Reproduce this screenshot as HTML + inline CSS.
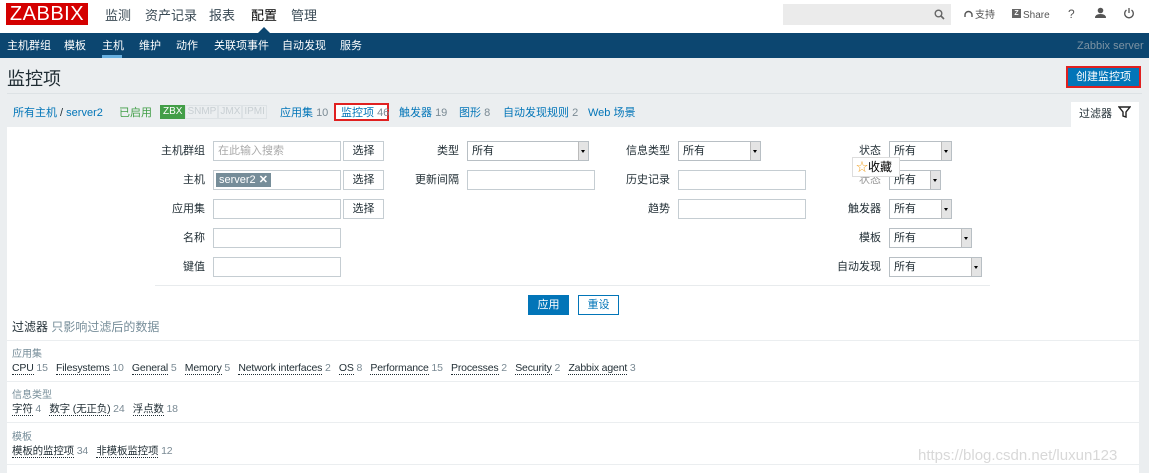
<!DOCTYPE html>
<html><head><meta charset="utf-8"><style>
*{margin:0;padding:0;box-sizing:border-box}
body{width:1149px;height:473px;overflow:hidden;background:#ebeef0;font-family:"Liberation Sans","Noto Sans CJK SC",sans-serif;font-size:11px;line-height:13px;color:#1f2c33;position:relative}
.a{position:absolute;white-space:nowrap}
.top{left:0;top:0;width:1149px;height:33px;background:#fff}
.nav{left:0;top:33px;width:1149px;height:25px;background:#0c4670}
.nav span{color:#fff;font-size:11px;position:absolute;top:7px}
.inp{position:absolute;height:20px;border:1px solid #c5cdd2;background:#fff}
.btn{position:absolute;height:20px;border:1px solid #c5cdd2;background:#fff;font-size:11px;text-align:center;line-height:18px}
.sel{position:absolute;height:20px;border:1px solid #b8bfc4;background:#fff;font-size:11px;line-height:19px;padding-left:4px}
.sel:after{content:"";position:absolute;right:0;top:0;width:9px;height:18px;background:#e4e4e4;border-left:1px solid #bbb}
.sel i{position:absolute;right:3px;top:8px;border-left:2px solid transparent;border-right:2px solid transparent;border-top:3px solid #000;z-index:2}
.lbl{position:absolute;font-size:11px;text-align:right}
.lk{color:#1f2c33;border-bottom:1px dotted #1f2c33}
.n{color:#7a8a94}
.tab{color:#0275b8;font-size:11px}
.tags{font-size:10.5px;letter-spacing:-0.17px}
</style></head><body>
<div class="a top"></div>
<div class="a" style="left:6px;top:3px;height:22px;width:82px;background:#d40000;color:#fff;font-size:20px;line-height:22px;text-align:center;letter-spacing:0.5px">ZABBIX</div>
<div class="a" style="left:105px;top:8px;font-size:13px;line-height:15px;color:#3a4a55">监测</div>
<div class="a" style="left:145px;top:8px;font-size:13px;line-height:15px;color:#3a4a55">资产记录</div>
<div class="a" style="left:209px;top:8px;font-size:13px;line-height:15px;color:#3a4a55">报表</div>
<div class="a" style="left:251px;top:8px;font-size:13px;line-height:15px;color:#000">配置</div>
<div class="a" style="left:291px;top:8px;font-size:13px;line-height:15px;color:#3a4a55">管理</div>
<div class="a" style="left:258px;top:27px;border-left:6px solid transparent;border-right:6px solid transparent;border-bottom:6px solid #0c4670"></div>
<div class="a" style="left:783px;top:4px;width:168px;height:21px;background:#ebebeb"></div>
<svg class="a" style="left:934px;top:9px" width="11" height="11" viewBox="0 0 11 11"><circle cx="4.5" cy="4.5" r="3.3" stroke="#666" stroke-width="1.4" fill="none"/><path d="M7 7l3 3" stroke="#666" stroke-width="1.6"/></svg>
<svg class="a" style="left:964px;top:10px" width="9" height="9"><path d="M1 7V5a3.5 3.5 0 0 1 7 0v2" stroke="#555" stroke-width="1.4" fill="none"/></svg>
<div class="a" style="left:975px;top:9px;font-size:10px;color:#555">支持</div>
<div class="a" style="left:1012px;top:9px;width:9px;height:9px;background:#666;color:#fff;font-size:7px;line-height:9px;text-align:center;font-weight:bold">Z</div>
<div class="a" style="left:1023px;top:9px;font-size:10px;color:#555">Share</div>
<div class="a" style="left:1068px;top:8px;font-size:12px;color:#555">?</div>
<svg class="a" style="left:1095px;top:7px" width="11" height="12"><circle cx="5.5" cy="3.5" r="2.8" fill="#555"/><path d="M0 11q0-4 5.5-4t5.5 4z" fill="#555"/></svg>
<svg class="a" style="left:1123px;top:7px" width="12" height="12"><path d="M3.5 3a4.3 4.3 0 1 0 5 0" stroke="#555" stroke-width="1.3" fill="none"/><path d="M6 1v5" stroke="#555" stroke-width="1.3"/></svg>
<div class="a nav">
<span style="left:7px">主机群组</span><span style="left:64px">模板</span><span style="left:102px">主机</span><span style="left:139px">维护</span><span style="left:176px">动作</span><span style="left:214px">关联项事件</span><span style="left:282px">自动发现</span><span style="left:340px">服务</span>
<span style="left:1077px;color:#7d93a3">Zabbix server</span>
</div>
<div class="a" style="left:102px;top:55px;width:20px;height:3px;background:#68b0e0"></div>
<div class="a" style="left:7px;top:68px;font-size:18px;line-height:22px;color:#1f2c33">监控项</div>
<div class="a" style="left:7px;top:93px;width:1135px;height:1px;background:#dde2e5"></div>
<div class="a" style="left:1066px;top:66px;width:75px;height:22px;border:2px solid #e02020;background:#0275b8;color:#fff;font-size:11px;line-height:18px;text-align:center">创建监控项</div>
<div class="a" style="left:13px;top:107px;font-size:11px"><span class="tab">所有主机</span> / <span class="tab">server2</span></div>
<div class="a" style="left:119px;top:107px;font-size:11px;color:#429e47">已启用</div>
<div class="a" style="left:160px;top:105px;height:14px;font-size:10px;line-height:12px">
<span style="display:inline-block;background:#429e47;color:#fff;padding:0 2px;border:1px solid #429e47">ZBX</span><span style="display:inline-block;color:#c8cfd3;border:1px solid #dde2e5;padding:0 1px">SNMP</span><span style="display:inline-block;color:#c8cfd3;border:1px solid #dde2e5;padding:0 1px">JMX</span><span style="display:inline-block;color:#c8cfd3;border:1px solid #dde2e5;padding:0 1px">IPMI</span></div>
<div class="a" style="left:280px;top:107px"><span class="tab">应用集</span> <span class="n">10</span></div>
<div class="a" style="left:334px;top:103px;width:55px;height:18px;border:2px solid #e02020;background:#fff;padding:2px 0 0 5px"><span class="tab">监控项</span> <span class="n">46</span></div>
<div class="a" style="left:399px;top:107px"><span class="tab">触发器</span> <span class="n">19</span></div>
<div class="a" style="left:459px;top:107px"><span class="tab">图形</span> <span class="n">8</span></div>
<div class="a" style="left:503px;top:107px"><span class="tab">自动发现规则</span> <span class="n">2</span></div>
<div class="a" style="left:588px;top:107px"><span class="tab">Web 场景</span></div>
<div class="a" style="left:1071px;top:102px;width:68px;height:26px;background:#fff"></div>
<div class="a" style="left:1079px;top:108px;font-size:11px">过滤器</div>
<svg class="a" style="left:1118px;top:106px" width="13" height="12"><path d="M1 1h11L8 6v5L5 10V6z" fill="none" stroke="#222" stroke-width="1.4"/></svg>
<div class="a" style="left:7px;top:127px;width:1132px;height:346px;background:#fff"></div>
<!-- col1 -->
<div class="lbl" style="left:150px;width:55px;top:145px">主机群组</div>
<div class="inp" style="left:213px;top:141px;width:128px;color:#aaa;font-size:11px;padding:3px 4px">在此输入搜索</div>
<div class="btn" style="left:343px;top:141px;width:41px">选择</div>
<div class="lbl" style="left:150px;width:55px;top:174px">主机</div>
<div class="inp" style="left:213px;top:170px;width:128px"><span style="position:absolute;left:2px;top:2px;height:14px;background:#768d99;color:#fff;font-size:11px;line-height:14px;padding:0 3px">server2 <b>✕</b></span></div>
<div class="btn" style="left:343px;top:170px;width:41px">选择</div>
<div class="lbl" style="left:150px;width:55px;top:203px">应用集</div>
<div class="inp" style="left:213px;top:199px;width:128px"></div>
<div class="btn" style="left:343px;top:199px;width:41px">选择</div>
<div class="lbl" style="left:150px;width:55px;top:232px">名称</div>
<div class="inp" style="left:213px;top:228px;width:128px"></div>
<div class="lbl" style="left:150px;width:55px;top:261px">键值</div>
<div class="inp" style="left:213px;top:257px;width:128px"></div>
<!-- col2 -->
<div class="lbl" style="left:400px;width:59px;top:145px">类型</div>
<div class="sel" style="left:467px;top:141px;width:122px">所有<i></i></div>
<div class="lbl" style="left:400px;width:59px;top:174px">更新间隔</div>
<div class="inp" style="left:467px;top:170px;width:128px"></div>
<!-- col3 -->
<div class="lbl" style="left:610px;width:60px;top:145px">信息类型</div>
<div class="sel" style="left:678px;top:141px;width:83px">所有<i></i></div>
<div class="lbl" style="left:610px;width:60px;top:174px">历史记录</div>
<div class="inp" style="left:678px;top:170px;width:128px"></div>
<div class="lbl" style="left:610px;width:60px;top:203px">趋势</div>
<div class="inp" style="left:678px;top:199px;width:128px"></div>
<!-- col4 -->
<div class="lbl" style="left:820px;width:61px;top:145px">状态</div>
<div class="sel" style="left:889px;top:141px;width:63px">所有<i></i></div>
<div class="lbl" style="left:820px;width:61px;top:174px;color:#999">状态</div>
<div class="sel" style="left:889px;top:170px;width:52px">所有<i></i></div>
<div class="a" style="left:852px;top:157px;width:48px;height:20px;background:#fff;border:1px solid #ddd;font-size:12px;line-height:18px;padding-left:3px;color:#000"><span style="color:#f0a020">☆</span>收藏</div>
<div class="lbl" style="left:820px;width:61px;top:203px">触发器</div>
<div class="sel" style="left:889px;top:199px;width:63px">所有<i></i></div>
<div class="lbl" style="left:820px;width:61px;top:232px">模板</div>
<div class="sel" style="left:889px;top:228px;width:83px">所有<i></i></div>
<div class="lbl" style="left:820px;width:61px;top:261px">自动发现</div>
<div class="sel" style="left:889px;top:257px;width:93px">所有<i></i></div>
<div class="a" style="left:155px;top:285px;width:835px;height:1px;background:#e8ebed"></div>
<div class="a" style="left:528px;top:295px;width:41px;height:20px;background:#0275b8;color:#fff;text-align:center;line-height:20px">应用</div>
<div class="btn" style="left:578px;top:295px;width:41px;color:#0275b8;border-color:#0275b8">重设</div>
<div class="a" style="left:12px;top:320px;font-size:12px;line-height:15px">过滤器 <span style="color:#768d99">只影响过滤后的数据</span></div>
<div class="a" style="left:7px;top:340px;width:1132px;height:1px;background:#ebeef0"></div>
<div class="a" style="left:12px;top:348px;font-size:10px;color:#768d99">应用集</div>
<div class="a tags" style="left:12px;top:362px"><span class="lk">CPU</span> <span class="n">15</span>&nbsp;&nbsp;&nbsp;<span class="lk">Filesystems</span> <span class="n">10</span>&nbsp;&nbsp;&nbsp;<span class="lk">General</span> <span class="n">5</span>&nbsp;&nbsp;&nbsp;<span class="lk">Memory</span> <span class="n">5</span>&nbsp;&nbsp;&nbsp;<span class="lk">Network interfaces</span> <span class="n">2</span>&nbsp;&nbsp;&nbsp;<span class="lk">OS</span> <span class="n">8</span>&nbsp;&nbsp;&nbsp;<span class="lk">Performance</span> <span class="n">15</span>&nbsp;&nbsp;&nbsp;<span class="lk">Processes</span> <span class="n">2</span>&nbsp;&nbsp;&nbsp;<span class="lk">Security</span> <span class="n">2</span>&nbsp;&nbsp;&nbsp;<span class="lk">Zabbix agent</span> <span class="n">3</span></div>
<div class="a" style="left:7px;top:381px;width:1132px;height:1px;background:#ebeef0"></div>
<div class="a" style="left:12px;top:389px;font-size:10px;color:#768d99">信息类型</div>
<div class="a tags" style="left:12px;top:403px"><span class="lk">字符</span> <span class="n">4</span>&nbsp;&nbsp;&nbsp;<span class="lk">数字 (无正负)</span> <span class="n">24</span>&nbsp;&nbsp;&nbsp;<span class="lk">浮点数</span> <span class="n">18</span></div>
<div class="a" style="left:7px;top:422px;width:1132px;height:1px;background:#ebeef0"></div>
<div class="a" style="left:12px;top:431px;font-size:10px;color:#768d99">模板</div>
<div class="a tags" style="left:12px;top:445px"><span class="lk">模板的监控项</span> <span class="n">34</span>&nbsp;&nbsp;&nbsp;<span class="lk">非模板监控项</span> <span class="n">12</span></div>
<div class="a" style="left:7px;top:464px;width:1132px;height:1px;background:#ebeef0"></div>
<div class="a" style="left:918px;top:447px;font-size:15px;line-height:17px;color:rgba(190,190,190,0.6)">https://blog.csdn.net/luxun123</div>
</body></html>
